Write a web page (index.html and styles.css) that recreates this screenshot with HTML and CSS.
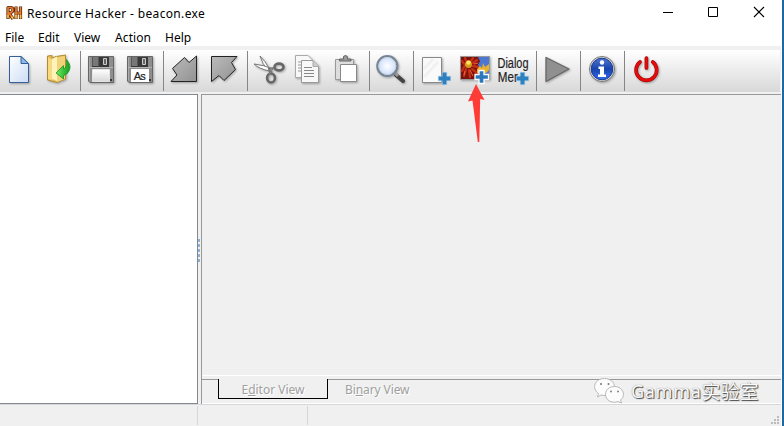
FILE: index.html
```
<!DOCTYPE html>
<html lang="en">
<head>
<meta charset="utf-8">
<title>Resource Hacker - beacon.exe</title>
<link rel="stylesheet" href="styles.css">
</head>
<body>
<div class="window">
  <header class="titlebar">
    <svg class="app-icon" width="18" height="16" viewBox="0 0 18 16"><g fill="none" stroke-linejoin="round"><path d="M3 14V2.500H5.500Q8 2.500 8 5Q8 7.500 4 8L8 14M11 1.500V14M15.500 1.500V14M11 8H15.500" stroke="#4b2a14" stroke-width="3.200"/><path d="M3 13.500V2.500H5.500Q7.800 2.500 7.800 5Q7.800 7.500 4 8L7.800 13.500M11 2V13.500M15.500 2V13.500M11 8H15.500" stroke="#ef7a29" stroke-width="1.700"/><path d="M3 10v3M6.500 11.500L7.800 13.500M11 10v3.500M15.500 10v3.500" stroke="#ffc03a" stroke-width="1.500"/></g></svg>
    <span class="title">Resource Hacker - beacon.exe</span>
    <div class="controls">
      <svg width="46" height="26" viewBox="645 0 46 26"><path d="M663 12.500h10" stroke="#000"/></svg>
      <svg width="46" height="26" viewBox="691 0 46 26"><path d="M708.500 7.500h9v9h-9z" fill="none" stroke="#000"/></svg>
      <svg width="45" height="26" viewBox="737 0 45 26"><path d="M754 7l10 10M764 7l-10 10" stroke="#000" stroke-width="1.100"/></svg>
    </div>
  </header>
  <nav class="menu"><span class="m1">File</span><span class="m2">Edit</span><span class="m3">View</span><span class="m4">Action</span><span class="m5">Help</span></nav>
  <div class="toolbar">
    <div class="group">
      <svg width="40" height="42" viewBox="0 50 40 42"><path d="M9.500 56.500H21L28.500 64V82.500H9.500Z" fill="url(#paper)" stroke="#345f98" filter="url(#shade)"/><path d="M21 56.500V63.500H28.500Z" fill="#8db9e8" stroke="#345f98"/></svg>
      <svg width="40" height="42" viewBox="40 50 40 42"><g filter="url(#shade)"><path d="M47.500 56L52 55.500V58L56 56.500L65.500 55V79L57 82.500 47.500 80Z" fill="#e6bd55" stroke="#b48b35"/><path d="M52 59l5-2.500v24.500l-5-2z" fill="#fff2ba"/><path d="M57 57.500L65 56V79L57 82Z" fill="#f1d27a"/><path d="M48 57v22l4 1V60z" fill="#f9d980"/></g><path d="M66.500 59.500Q72 65.500 69 71Q67 75 63.500 75.500V79L56 73 63.500 65.500V69Q67.500 68 66.500 59.500Z" fill="url(#green)" stroke="#179322" stroke-width=".8"/></svg>
    </div>
    <div class="group">
      <svg width="41" height="42" viewBox="81 50 41 42"><use href="#disk"/><path d="M92.500 69.500h17v12h-17z" fill="url(#label)" stroke="#e4e4e4"/></svg>
      <svg width="41" height="42" viewBox="122 50 41 42"><use href="#disk" x="39"/><path d="M131 69h18v13h-18z" fill="#fff"/><text x="133.700" y="80" class="astext" textLength="12">As</text></svg>
    </div>
    <div class="group">
      <svg width="41" height="42" viewBox="164 50 41 42"><path d="M196.500 56V81.500H171L177 75 172.500 68.500 184.500 57.500 189 62.500Z" fill="url(#steel)" stroke="#222" filter="url(#shade)"/></svg>
      <svg width="42" height="42" viewBox="205 50 42 42"><path d="M211.500 56.500H237L231.500 62.500 235.500 69.500 224 80.500 219 75.500 211.500 81.500Z" fill="url(#steel)" stroke="#222" filter="url(#shade)"/></svg>
    </div>
    <div class="group">
      <svg width="40" height="42" viewBox="248 50 40 42"><g filter="url(#shade)"><path d="M260 56Q265 61 269 68L272 72 268 71Q262 63 260 56Z" fill="#fff" stroke="#777"/><path d="M254 64Q264 65 273 69L270 71Q259 69 254 64Z" fill="#fff" stroke="#777"/><ellipse cx="279" cy="67" rx="4.500" ry="3.400" fill="none" stroke="#666" stroke-width="2.600"/><ellipse cx="271" cy="78" rx="3.900" ry="4.500" fill="none" stroke="#666" stroke-width="2.600"/><path d="M268 69l6-1M270 69v6" stroke="#777" stroke-width="2"/></g></svg>
      <svg width="40" height="42" viewBox="288 50 40 42"><g filter="url(#shade)"><path d="M295.500 55.500H308L312.500 60V77.500H295.500Z" fill="#f8f8f8" stroke="#aaa"/><path d="M298 62h7M298 65h7M298 68h7M298 71h7" stroke="#999"/><path d="M301.500 60.500H313L318.500 66V82.500H301.500Z" fill="#f8f8f8" stroke="#999"/></g><path d="M313 60.500V66.500H318.500" fill="#ccc" stroke="#aaa"/><path d="M304 67.500h8M304 70.500h10M304 73.500h10M304 76.500h10" stroke="#888"/></svg>
      <svg width="41" height="42" viewBox="328 50 41 42"><g filter="url(#shade)"><path d="M335.500 59.500h18v20h-18z" fill="#ddd" stroke="#999"/><path d="M339.500 61V59h4Q342.500 55.500 345.500 55.500Q348 55.500 347.500 59H351V61Z" fill="#999" stroke="#666"/><path d="M340.500 64.500H356.500V81.500H340.500Z" fill="#fff" stroke="#888"/></g></svg>
    </div>
    <div class="group">
      <svg width="43" height="42" viewBox="370 50 43 42"><g filter="url(#shade)"><path d="M396 75l7 6" stroke="#444" stroke-width="4.200" stroke-linecap="round"/><path d="M394 72l4 4" stroke="#999" stroke-width="3"/><circle cx="387.300" cy="66" r="10" fill="url(#glass)" stroke="#778493" stroke-width="2.200"/><circle cx="387.300" cy="66" r="8.500" fill="none" stroke="#c1cede"/></g></svg>
    </div>
    <div class="group">
      <svg width="41" height="42" viewBox="414 50 41 42"><g filter="url(#shade)"><path d="M422.500 57.500h19v25h-19z" fill="#fafafa" stroke="#888"/></g><path d="M424 77l14-15M424 69l9-10" stroke="#f1f1f1" stroke-width="3"/><use href="#plus" x="444.500" y="78.500"/></svg>
      <svg width="40" height="42" viewBox="455 50 40 42"><g filter="url(#shade)"><path d="M460.500 56.500h29v23h-29z" fill="#4b77d2" stroke="#999"/></g><path d="M461 57h17l2 4-2 4 3 6-2 8H461Z" fill="#7b130d"/><g fill="none" stroke="#c52e17" stroke-width="2.300" stroke-linecap="round"><path d="M465 65L462 61M466 61L465 58M471 61L473 58M473 63L477 60M473 66L478 67M472 69L477 73M469 70L470 77M466 69L464 76M464 67L462 71"/></g><path d="M465 71l-1 4M470 70l3 6M474 64l4-1" stroke="#ee662b"/><circle cx="468.500" cy="64.500" r="3.500" fill="#d49b1c"/><circle cx="468.500" cy="62.500" r="2.300" fill="#ffe35c"/><path d="M477 69l3-3 2 2 1-5 2 4 4-3v6l-3 3h-9z" fill="#eab12c"/><path d="M480 70.500h4v4h4.500v5H484v4h-5v-4h-4v-5h4v-4z" fill="#2b79bb" stroke="#fff" stroke-width="1.300"/></svg>
      <svg width="41" height="42" viewBox="495 50 41 42"><text x="497.500" y="67.500" class="dialog-text" textLength="31" lengthAdjust="spacingAndGlyphs">Dialog</text><text x="497.800" y="82" class="dialog-text" textLength="20" lengthAdjust="spacingAndGlyphs">Mer</text><use href="#plus" x="522.500" y="78.500"/></svg>
    </div>
    <div class="group"><svg width="43" height="42" viewBox="537 50 43 42"><path d="M546 57.500L569 69 546 81.500Z" fill="#909090" stroke="#666" stroke-width="1.300" stroke-linejoin="round" filter="url(#shade)"/></svg></div>
    <div class="group"><svg width="43" height="42" viewBox="581 50 43 42"><g filter="url(#shade)"><circle cx="602" cy="69" r="12.500" fill="#ddd" stroke="#777"/><circle cx="602" cy="69" r="10.800" fill="url(#blue)" stroke="#183b92"/></g><circle cx="602" cy="62.500" r="2.200" fill="#fff"/><path d="M598.500 66.500h5.500v8h2v2.500h-8v-2.500h2v-5.500h-1.500z" fill="#fff"/></svg></div>
    <div class="group last"><svg width="45" height="42" viewBox="625 50 45 42"><g filter="url(#shade)" fill="none" stroke-linecap="round"><path d="M640 62A10.300 10.300 0 1 0 652.800 62M646.400 58V68" stroke="#9f0909" stroke-width="3.700"/><path d="M640 62A10.300 10.300 0 1 0 652.800 62M646.400 58V68" stroke="#e40c0c" stroke-width="2.500"/></g></svg></div>
  </div>
  <main class="workspace">
    <section class="tree"></section>
    <div class="splitter"><i></i><i></i><i></i><i></i><i></i></div>
    <section class="editor">
      <div class="canvas"></div>
      <div class="tabs"><div class="tab-gap"></div><div class="tab selected">E<u>d</u>itor View</div><div class="tab binary">Bi<u>n</u>ary View</div></div>
    </section>
  </main>
  <footer class="status"><div class="cell first"></div><div class="cell second"></div><svg class="grip" width="11" height="11" viewBox="0 0 11 11"><path d="M6 0h2v2H6zM3 3h2v2H3zM6 3h2v2H6zM0 6h2v2H0zM3 6h2v2H3zM6 6h2v2H6z" fill="#bcbcbc"/></svg></footer>
</div>
<svg class="arrow" width="20" height="60" viewBox="467 84 20 60"><path d="M476 84L484.500 100 480.200 99 479.300 142H477.800L472.500 100.500 468 101.500Z" fill="#ff3b38"/></svg>
<div class="watermark">
  <svg width="32" height="29" viewBox="593 376 32 29"><g fill="#fcfcfc" stroke="#aaa" stroke-width=".8"><path d="M604.500 378.500C610 378.500 614.500 382 614.500 387S610 395.500 604 395.500L601 395 597.500 397 598.500 393.500C591 388 595 378.500 604.500 378.500Z"/><path d="M614.500 386.500C619.500 386.500 623.500 390 623.500 394.500Q623.500 398 620.500 400L621.500 403 618 401.500C611 404 605.500 399.500 605.500 394.500S609.500 386.500 614.500 386.500Z"/></g><g fill="#777"><circle cx="601" cy="384" r="1"/><circle cx="608.500" cy="384" r="1"/><circle cx="611" cy="391.500" r=".9"/><circle cx="618" cy="391.500" r=".9"/></g></svg>
  <span class="latin">Gamma</span><span class="cjk">实验室</span>
</div>
<svg class="defs" width="0" height="0"><defs>
  <linearGradient id="paper" x2="1" y2="1"><stop stop-color="#fff"/><stop offset="1" stop-color="#cbdcf5"/></linearGradient>
  <linearGradient id="green" x2="1"><stop stop-color="#6dec5f"/><stop offset="1" stop-color="#139d20"/></linearGradient>
  <linearGradient id="label" x2="0" y2="1"><stop stop-color="#fff"/><stop offset="1" stop-color="#d8d8d8"/></linearGradient>
  <linearGradient id="steel" x2="1" y2="1"><stop stop-color="#bbb"/><stop offset="1" stop-color="#929292"/></linearGradient>
  <linearGradient id="blue" x2="0" y2="1"><stop stop-color="#5076ce"/><stop offset=".5" stop-color="#1744ad"/><stop offset="1" stop-color="#356bed"/></linearGradient>
  <radialGradient id="glass"><stop stop-color="#fff"/><stop offset="1" stop-color="#c9ddfa"/></radialGradient>
  <filter id="shade" x="-20%" y="-20%" width="150%" height="150%" color-interpolation-filters="sRGB"><feDropShadow dx="1" dy="1" stdDeviation=".8" flood-opacity=".3"/></filter>
  <g id="disk"><path d="M88.500 56.500H113.500V82.500H90L88.500 81Z" fill="#8e8e8e" stroke="#666" filter="url(#shade)"/><path d="M89.500 57.500v23" stroke="#aaa"/><path d="M92 57h17v10H92z" fill="#383838"/><path d="M92.500 57h6v9h-6z" fill="#777"/><path d="M103.500 58.500h3v6h-3z" fill="#666" stroke="#ccc"/><path d="M89 67.500h24" stroke="#b5b5b5"/><path d="M110 79h2v2h-2z" fill="#333"/></g>
  <path id="plus" d="M-2.300-6.200H2.300V-2.300H6.200V2.300H2.300V6.200H-2.300V2.300H-6.200V-2.300H-2.300Z" fill="#2f80bf" stroke="#a9d1ee" stroke-width=".6"/>
</defs></svg>
</body>
</html>
```
FILE: styles.css
```
* { box-sizing: border-box; }
body { margin: 0; width: 784px; height: 426px; overflow: hidden; background: #1869a5; font-family: "Noto Sans", "Open Sans", sans-serif; }
.window { width: 782px; height: 426px; display: flex; flex-direction: column; background: #f0f0f0; border-right: 1px solid #fff; }
.titlebar { height: 26px; flex: none; display: flex; align-items: center; background: #fff; padding-left: 5px; font-size: 12px; }
.app-icon { margin-right: 4px; flex: none; }
.title { letter-spacing: .34px; white-space: nowrap; }
.controls { display: flex; margin-left: auto; margin-right: -1px; }
.controls svg { display: block; }
.menu { height: 20px; flex: none; display: flex; background: #fff; font-size: 12px; line-height: 23px; padding-left: 5px; }
.menu span { flex: none; }
.m1 { width: 33px; }
.m2 { width: 36px; }
.m3 { width: 41px; }
.m4 { width: 50px; letter-spacing: .1px; }
.toolbar { height: 42px; margin: 4px 1px 2px 0; flex: none; display: flex; background: linear-gradient(#fff, #d8d8d8); }
.group { display: flex; border-right: 1px solid transparent; border-image: linear-gradient(transparent 2px, #858585 2px, #858585 40px, transparent 40px) 1; }
.group svg { display: block; }
.group.last { border: 0; }
.astext { font: 11px "Liberation Sans", sans-serif; fill: #222; stroke: #222; stroke-width: .2px; }
.dialog-text { font: 15.5px "Liberation Sans", sans-serif; fill: #222; stroke: #222; stroke-width: .2px; }
.workspace { height: 310px; flex: none; display: flex; }
.tree { width: 198px; background: #fff; border: 1px solid #828790; border-left: 0; }
.splitter { width: 3px; display: flex; flex-direction: column; justify-content: center; gap: 2px; padding-top: 3px; }
.splitter i { width: 2px; height: 3px; background: #91afd0; }
.editor { flex: 1; display: flex; flex-direction: column; border-left: 1px solid #999; border-top: 1px solid #999; }
.canvas { height: 284px; border-bottom: 3px solid #f0f0f0; box-shadow: inset 0 -1px #fff; }
.tabs { display: flex; height: 25px; font-size: 12px; line-height: 20px; color: #a0a0a0; text-shadow: 1px 1px #fff; border-bottom: 1px solid #fff; }
.tab-gap { width: 16px; border-top: 1px solid #999; }
.selected { width: 110px; height: 20px; border: 1px solid #000; border-top: 0; text-align: center; line-height: 21px; }
.binary { flex: 1; border-top: 1px solid #999; padding-left: 17px; line-height: 19px; letter-spacing: -.1px; }
.status { flex: 1; display: flex; border-top: 1px solid #d7d7d7; padding-top: 1px; }
.cell { border-right: 1px solid #d7d7d7; height: 19px; }
.first { width: 198px; }
.second { width: 110px; }
.grip { margin: 10px -1px 0 auto; }
.arrow { position: absolute; left: 467px; top: 84px; }
.watermark { position: absolute; left: 593px; top: 376px; display: flex; color: #fafafa; text-shadow: 1px 1px 1px #444, 0 0 1px #777; white-space: nowrap; }
.watermark span { line-height: 31px; }
.latin { margin-left: 6px; font-size: 18px; letter-spacing: .7px; }
.watermark .cjk { font: 19px/29px "Noto Sans CJK SC", sans-serif; }
.defs { position: absolute; }
```
